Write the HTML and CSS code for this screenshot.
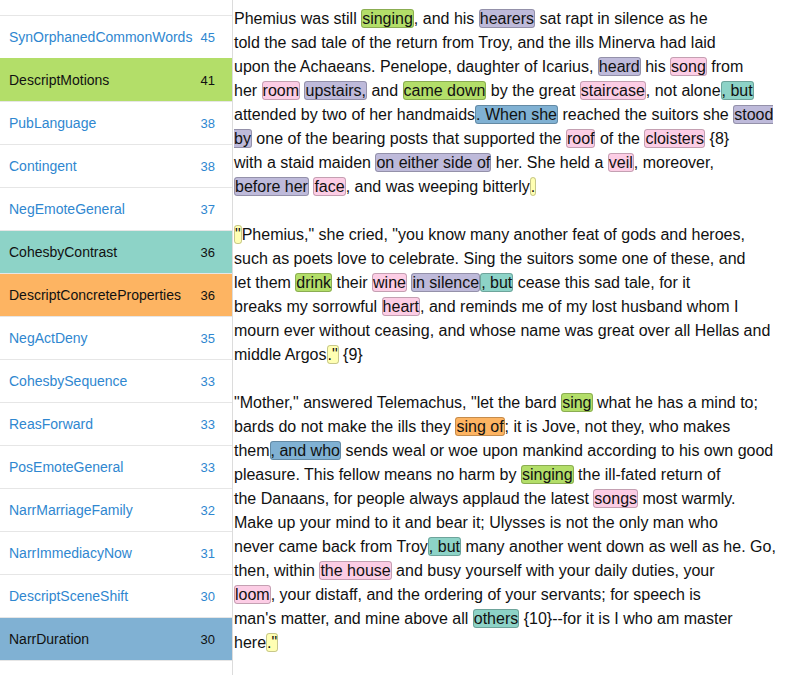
FILE: index.html
```html
<!DOCTYPE html>
<html>
<head>
<meta charset="utf-8">
<link rel="stylesheet" href="styles.css">
</head>
<body>
<div class="app">
  <aside class="sidebar">
    <ul class="tags">
      <li class="tag"><span class="name">SynOrphanedCommonWords</span><span class="count">45</span></li>
      <li class="tag on green"><span class="name">DescriptMotions</span><span class="count">41</span></li>
      <li class="tag"><span class="name">PubLanguage</span><span class="count">38</span></li>
      <li class="tag"><span class="name">Contingent</span><span class="count">38</span></li>
      <li class="tag"><span class="name">NegEmoteGeneral</span><span class="count">37</span></li>
      <li class="tag on teal"><span class="name">CohesbyContrast</span><span class="count">36</span></li>
      <li class="tag on orange"><span class="name">DescriptConcreteProperties</span><span class="count">36</span></li>
      <li class="tag"><span class="name">NegActDeny</span><span class="count">35</span></li>
      <li class="tag"><span class="name">CohesbySequence</span><span class="count">33</span></li>
      <li class="tag"><span class="name">ReasForward</span><span class="count">33</span></li>
      <li class="tag"><span class="name">PosEmoteGeneral</span><span class="count">33</span></li>
      <li class="tag"><span class="name">NarrMarriageFamily</span><span class="count">32</span></li>
      <li class="tag"><span class="name">NarrImmediacyNow</span><span class="count">31</span></li>
      <li class="tag"><span class="name">DescriptSceneShift</span><span class="count">30</span></li>
      <li class="tag on blue"><span class="name">NarrDuration</span><span class="count">30</span></li>
    </ul>
  </aside>
  <main class="text">
    <p>Phemius was still <span class="hl green">singing</span>, and his <span class="hl purple">hearers</span> sat rapt in silence as he<br>told the sad tale of the return from Troy, and the ills Minerva had laid<br>upon the Achaeans. Penelope, daughter of Icarius, <span class="hl purple">heard</span> his <span class="hl pink">song</span> from<br>her <span class="hl pink">room</span> <span class="hl purple">upstairs,</span> and <span class="hl green">came down</span> by the great <span class="hl pink">staircase</span>, not alone<span class="hl teal">, but</span><br>attended by two of her handmaids<span class="hl blue">. When she</span> reached the suitors she <span class="hl purple">stood<br>by</span> one of the bearing posts that supported the <span class="hl pink">roof</span> of the <span class="hl pink">cloisters</span> {8}<br>with a staid maiden <span class="hl purple">on either side of</span> her. She held a <span class="hl pink">veil</span>, moreover,<br><span class="hl purple">before her</span> <span class="hl pink">face</span>, and was weeping bitterly<span class="hl yellow">.</span></p>
    <p><span class="hl yellow">"</span>Phemius," she cried, "you know many another feat of gods and heroes,<br>such as poets love to celebrate. Sing the suitors some one of these, and<br>let them <span class="hl green">drink</span> their <span class="hl pink">wine</span> <span class="hl purple">in silence</span><span class="hl teal">, but</span> cease this sad tale, for it<br>breaks my sorrowful <span class="hl pink">heart</span>, and reminds me of my lost husband whom I<br>mourn ever without ceasing, and whose name was great over all Hellas and<br>middle Argos<span class="hl yellow">."</span> {9}</p>
    <p>"Mother," answered Telemachus, "let the bard <span class="hl green">sing</span> what he has a mind to;<br>bards do not make the ills they <span class="hl orange">sing of</span>; it is Jove, not they, who makes<br>them<span class="hl blue">, and who</span> sends weal or woe upon mankind according to his own good<br>pleasure. This fellow means no harm by <span class="hl green">singing</span> the ill-fated return of<br>the Danaans, for people always applaud the latest <span class="hl pink">songs</span> most warmly.<br>Make up your mind to it and bear it; Ulysses is not the only man who<br>never came back from Troy<span class="hl teal">, but</span> many another went down as well as he. Go,<br>then, within <span class="hl pink">the house</span> and busy yourself with your daily duties, your<br><span class="hl pink">loom</span>, your distaff, and the ordering of your servants; for speech is<br>man's matter, and mine above all <span class="hl teal">others</span> {10}--for it is I who am master<br>here<span class="hl yellow">."</span></p>
  </main>
</div>
</body>
</html>
```
FILE: styles.css
```css
html, body {
  margin: 0;
  padding: 0;
  background: #fff;
}
body {
  font-family: "Liberation Sans", Arial, Helvetica, sans-serif;
  color: #111;
}
.app {
  display: flex;
  align-items: stretch;
  min-height: 675px;
  height: 675px;
  overflow: hidden;
}
.sidebar {
  width: 232px;
  flex: 0 0 232px;
  border-right: 1px solid #dcdcdc;
}
.tags {
  list-style: none;
  margin: 0;
  padding: 15px 0 0 0;
}
.tag {
  display: flex;
  align-items: center;
  justify-content: space-between;
  height: 42px;
  padding: 0 17px 0 9px;
  border-top: 1px solid #e6e6e6;
  color: #2f87d0;
  font-size: 14px;
}
.tag:last-child {
  border-bottom: 1px solid #e6e6e6;
}
.tag .count {
  font-size: 13px;
}
.tag.on {
  color: #111;
}
.tag.green { background: #b3de69; border-top-color: #b3de69; }
.tag.teal { background: #8dd3c7; border-top-color: #e6e6e6; }
.tag.orange { background: #fdb462; border-top-color: #e6e6e6; }
.tag.blue { background: #80b1d3; border-top-color: #e6e6e6; }
.text {
  flex: 1;
  padding: 7px 0 0 1px;
  font-size: 16px;
  line-height: 24px;
}
.text p {
  margin: 0 0 24px 0;
  white-space: nowrap;
}
.hl {
  border: 1px solid rgba(0, 0, 0, 0.22);
  border-radius: 3px;
}
.hl.green { background: #b3de69; }
.hl.purple { background: #bebada; }
.hl.pink { background: #fccde5; }
.hl.teal { background: #8dd3c7; }
.hl.blue { background: #80b1d3; }
.hl.orange { background: #fdb462; }
.hl.yellow { background: #ffffb3; }
```
